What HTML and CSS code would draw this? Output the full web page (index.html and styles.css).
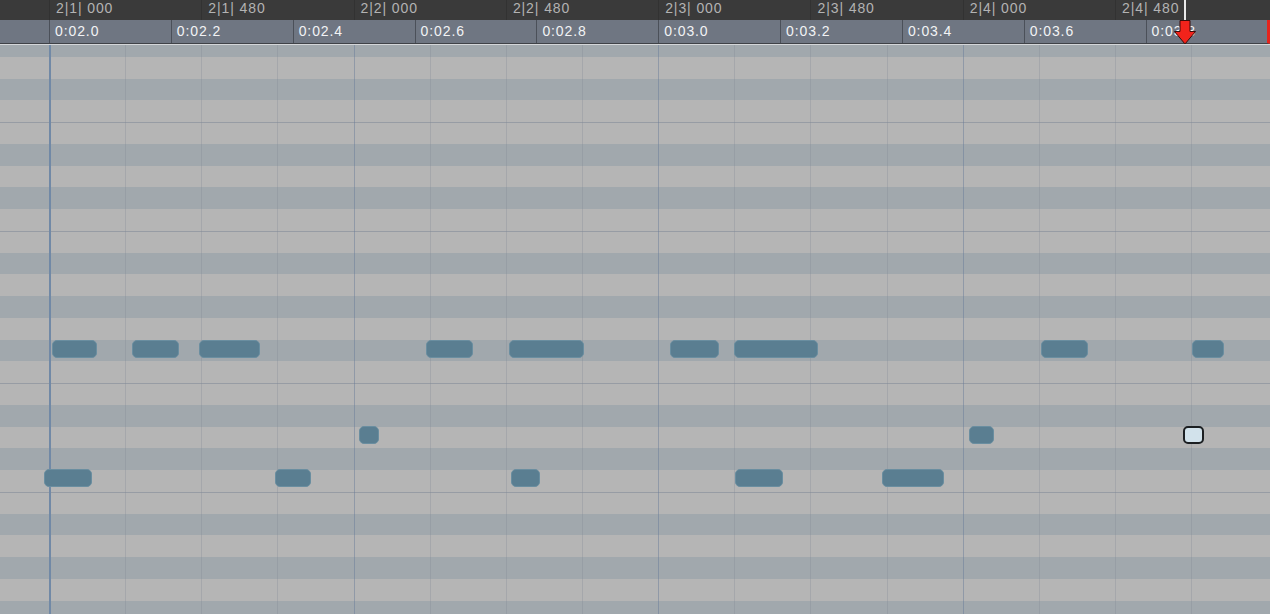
FILE: index.html
```html
<!DOCTYPE html>
<html lang="en">
<head>
    <meta charset="UTF-8">
    <meta name="viewport" content="width=device-width, initial-scale=1.0">
    <title>Piano Roll</title>
    <link rel="stylesheet" href="styles.css">
</head>

<body>
    <div class="editor">
        <!-- ruler: bars/beats on top, seconds below -->
        <div class="ruler">
            <div class="bars">
                <div class="bar-seg">2|1| 000</div>
                <div class="bar-seg">2|1| 480</div>
                <div class="bar-seg">2|2| 000</div>
                <div class="bar-seg">2|2| 480</div>
                <div class="bar-seg">2|3| 000</div>
                <div class="bar-seg">2|3| 480</div>
                <div class="bar-seg">2|4| 000</div>
                <div class="bar-seg">2|4| 480</div>
            </div>
            <div class="times">
                <div class="time-seg">0:02.0</div>
                <div class="time-seg">0:02.2</div>
                <div class="time-seg">0:02.4</div>
                <div class="time-seg">0:02.6</div>
                <div class="time-seg">0:02.8</div>
                <div class="time-seg">0:03.0</div>
                <div class="time-seg">0:03.2</div>
                <div class="time-seg">0:03.4</div>
                <div class="time-seg">0:03.6</div>
                <div class="time-seg">0:03.8</div>
            </div>
            <div class="playhead"></div>
            <svg class="playhead-arrow" width="22" height="25" viewBox="0 0 22 25">
                <path d="M6 0.5 H16 V11.5 H21.5 L11 24 L0.5 11.5 H6 Z" fill="#f2231b" stroke="#3b0d0a" stroke-width="1"/>
            </svg>
        </div>

        <div class="roll">
            <div class="keys">
                <div class="key black"></div>
                <div class="key"></div>
                <div class="key black"></div>
                <div class="key"></div>
                <div class="key edge"></div>
                <div class="key black"></div>
                <div class="key"></div>
                <div class="key black"></div>
                <div class="key"></div>
                <div class="key edge"></div>
                <div class="key black"></div>
                <div class="key"></div>
                <div class="key black"></div>
                <div class="key"></div>
                <div class="key black"></div>
                <div class="key"></div>
                <div class="key edge"></div>
                <div class="key black"></div>
                <div class="key"></div>
                <div class="key black"></div>
                <div class="key"></div>
                <div class="key edge"></div>
                <div class="key black"></div>
                <div class="key"></div>
                <div class="key black"></div>
                <div class="key"></div>
                <div class="key black"></div>
            </div>

            <div class="cols">
                <div class="col bar"></div>
                <div class="col"></div>
                <div class="col"></div>
                <div class="col"></div>
                <div class="col beat"></div>
                <div class="col"></div>
                <div class="col"></div>
                <div class="col"></div>
                <div class="col beat"></div>
                <div class="col"></div>
                <div class="col"></div>
                <div class="col"></div>
                <div class="col beat"></div>
                <div class="col"></div>
                <div class="col"></div>
                <div class="col"></div>
            </div>

            <div class="note row-a" style="left:52px;width:45px"></div>
            <div class="note row-a" style="left:132px;width:47px"></div>
            <div class="note row-a" style="left:199px;width:61px"></div>
            <div class="note row-a" style="left:426px;width:47px"></div>
            <div class="note row-a" style="left:509px;width:75px"></div>
            <div class="note row-a" style="left:670px;width:49px"></div>
            <div class="note row-a" style="left:734px;width:84px"></div>
            <div class="note row-a" style="left:1041px;width:47px"></div>
            <div class="note row-a" style="left:1192px;width:32px"></div>

            <div class="note row-b" style="left:359px;width:20px"></div>
            <div class="note row-b" style="left:969px;width:25px"></div>
            <div class="note row-b selected" style="left:1183px;width:21px"></div>

            <div class="note row-c" style="left:44px;width:48px"></div>
            <div class="note row-c" style="left:275px;width:36px"></div>
            <div class="note row-c" style="left:511px;width:29px"></div>
            <div class="note row-c" style="left:735px;width:48px"></div>
            <div class="note row-c" style="left:882px;width:62px"></div>
        </div>
    </div>
</body>
</html>
```

FILE: styles.css
```css
body {
    margin: 0;
    font-family: "Liberation Sans", Arial, sans-serif;
    background-color: #b5b5b5;
    overflow: hidden;
}

.editor {
    width: 1270px;
    height: 614px;
    display: flex;
    flex-direction: column;
    overflow: hidden;
}

/* ruler */

.ruler {
    position: relative;
    flex: none;
}

.bars {
    display: flex;
    height: 20px;
    padding-left: 49px;
    background-color: #3a3a3a;
}

.bar-seg {
    flex: none;
    width: 152.3px;
    box-sizing: border-box;
    padding-left: 6px;
    border-left: 1px solid #323232;
    color: #b3b3b3;
    font-size: 14px;
    letter-spacing: 0.9px;
    line-height: 16px;
}

.times {
    display: flex;
    height: 23px;
    padding-left: 49px;
    background-color: #6f7682;
    border-bottom: 1px solid #3f4247;
    box-shadow: 0 1px 0 #d4d6d9;
    border-right: 3px solid #e5241c;
}

.time-seg {
    flex: none;
    width: 121.85px;
    box-sizing: border-box;
    padding-left: 5px;
    border-left: 1px solid #4b5059;
    color: #f2f3f5;
    font-size: 14px;
    letter-spacing: 0.9px;
    line-height: 23px;
}

.playhead {
    position: absolute;
    left: 1184px;
    top: 0;
    width: 1.5px;
    height: 44px;
    background-color: #e9e9e9;
}

.playhead-arrow {
    position: absolute;
    left: 1174px;
    top: 20px;
}

/* grid */

.roll {
    position: relative;
    flex: 1;
    margin-top: 1px;
    overflow: hidden;
}

.keys {
    display: flex;
    flex-direction: column;
    margin-top: -10px;
}

.key {
    height: 21.75px;
    flex: none;
    background-color: #b5b5b5;
}

.key.black {
    background-color: #a1a8ad;
}

.key.edge {
    box-shadow: inset 0 1px 0 #979ca4;
}

.cols {
    position: absolute;
    inset: 0;
    display: flex;
    padding-left: 49px;
}

.col {
    flex: none;
    width: 76.15px;
    box-sizing: border-box;
    border-left: 1px solid rgba(128, 136, 150, 0.3);
}

.col.beat {
    border-left-color: rgba(100, 120, 150, 0.45);
}

.col.bar {
    border-left: 2px solid #7189a6;
}

.note {
    position: absolute;
    height: 18px;
    box-sizing: border-box;
    background-color: #5a7e91;
    border: 1px solid #6a8ea0;
    border-radius: 5px;
}

.row-a {
    top: 295px;
}

.row-b {
    top: 381px;
}

.row-c {
    top: 424px;
}

.note.selected {
    background-color: #d2e2eb;
    border: 2px solid #1c1f22;
    border-radius: 5px;
}
```
